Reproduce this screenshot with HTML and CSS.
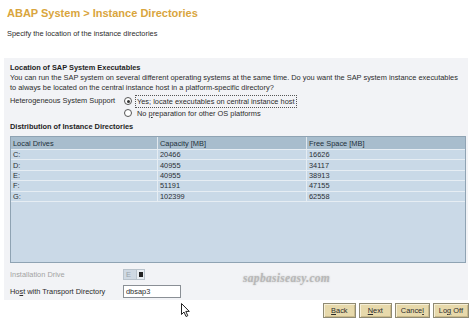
FILE: index.html
```html
<!DOCTYPE html>
<html>
<head>
  <title>ABAP System - Instance Directories</title>
  <link rel="stylesheet" href="styles.css">
</head>
<body>
  <div class="header">
    <h1>ABAP System &gt; Instance Directories</h1>
    <div class="intro">Specify the location of the instance directories</div>
  </div>

  <div class="panel">
    <div class="section-title">Location of SAP System Executables</div>
    <p class="para">You can run the SAP system on several different operating systems at the same time. Do you want the SAP system instance executables to always be located on the central instance host in a platform-specific directory?</p>

    <div class="form-row hetero">
      <div class="label">Heterogeneous System Support</div>
      <div class="options">
        <div class="option"><span class="radio checked"></span><span class="focus">Yes; locate executables on central instance host</span></div>
        <div class="option"><span class="radio"></span><span>No <u>p</u>reparation for other OS platforms</span></div>
      </div>
    </div>

    <div class="section-title dist">Distribution of Instance Directories</div>
    <div class="grid">
      <table>
        <tr>
          <th class="c1">Local Drives</th>
          <th class="c2">Capacity [MB]</th>
          <th class="c3">Free Space [MB]</th>
        </tr>
        <tr><td>C:</td><td>20466</td><td>16626</td></tr>
        <tr><td>D:</td><td>40955</td><td>34117</td></tr>
        <tr><td>E:</td><td>40955</td><td>38913</td></tr>
        <tr><td>F:</td><td>51191</td><td>47155</td></tr>
        <tr><td>G:</td><td>102399</td><td>62558</td></tr>
      </table>
    </div>

    <div class="form-row drive">
      <div class="label disabled">Installation Drive</div>
      <div class="select"><span>E</span><span class="drop"></span></div>
    </div>
    <div class="form-row host">
      <div class="label">Ho<u>s</u>t with Transport Directory</div>
      <div class="input">dbsap3</div>
    </div>

    <div class="watermark">sapbasiseasy.com</div>
  </div>

  <div class="buttons">
    <button><u>B</u>ack</button>
    <button><u>N</u>ext</button>
    <button>Cance<u>l</u></button>
    <button>Lo<u>g</u> Off</button>
  </div>

  <svg class="cursor" width="10" height="15" viewBox="0 0 10 15">
    <path d="M0.5 0.5 L0.5 11.5 L3 9 L5 13.5 L6.8 12.7 L4.8 8.4 L8.3 8.4 Z" fill="#fff" stroke="#222" stroke-width="1"/>
  </svg>
</body>
</html>
```

FILE: styles.css
```css
body {
  margin: 0;
  font-family: "Liberation Sans", Arial, sans-serif;
  font-size: 7.4px;
  color: #2b2b2b;
  background: #fff;
  position: relative;
  width: 474px;
  height: 322px;
  overflow: hidden;
}
.header {
  padding: 6px 7px 0;
  height: 52px;
}
h1 {
  margin: 0;
  font-size: 11px;
  line-height: 15px;
  color: #d9a53d;
}
.intro {
  margin-top: 7px;
  line-height: 12px;
}
.panel {
  position: relative;
  margin: 0 6px 0 4px;
  padding: 5px 2px 2px 6px;
  background: #f2f3f6;
  height: 235px;
}
.section-title {
  font-weight: bold;
  line-height: 10px;
  color: #1e1e1e;
}
.para {
  margin: 0;
  line-height: 10px;
  width: 456px;
}
.form-row {
  display: grid;
  grid-template-columns: 113px 1fr;
  align-items: center;
}
.hetero {
  margin-top: 2px;
  align-items: start;
}
.hetero .label {
  line-height: 12px;
}
.options .option {
  display: flex;
  align-items: center;
  height: 12px;
}
.radio {
  width: 6px;
  height: 6px;
  border: 1px solid #555;
  border-radius: 50%;
  background: #fff;
  margin: 0 5px 0 1px;
  position: relative;
}
.radio.checked::after {
  content: "";
  position: absolute;
  left: 1.5px;
  top: 1.5px;
  width: 3px;
  height: 3px;
  border-radius: 50%;
  background: #333;
}
.focus {
  border: 1px dotted #555;
  padding: 1px 1px;
  margin-left: -2px;
}
.dist {
  margin-top: 3px;
}
.grid {
  margin-top: 4px;
  width: 454px;
  height: 125px;
  border: 1px solid #8fa3b3;
  background: #cad9e7;
}
table {
  width: 100%;
  border-collapse: collapse;
}
th {
  background: #a8bdcd;
  font-weight: normal;
  text-align: left;
  height: 12px;
  padding: 0 2px;
  color: #22303a;
  border-left: 1px solid #e1e8ee;
  border-bottom: 1px solid #e6edf3;
}
th.c1 {
  width: 142px;
  border-left: none;
}
th.c2 {
  width: 144px;
}
td {
  height: 9.4px;
  line-height: 9px;
  padding: 0 2px;
  background: #c9d9e7;
  border-left: 1px solid #e6edf3;
  border-bottom: 1px solid #e6edf3;
  color: #2a2f35;
}
td:first-child {
  border-left: none;
}
.drive {
  margin-top: 5px;
  height: 12px;
}
.label.disabled {
  color: #a3a3a3;
}
.select {
  width: 22px;
  height: 11px;
  box-sizing: border-box;
  border: 1px solid #b9c3cc;
  background: #cfd9e3;
  display: flex;
  align-items: center;
  justify-content: space-between;
  padding-left: 2px;
  color: #9aa3ab;
}
.drop {
  width: 7px;
  height: 9px;
  background: #e8edf2;
  border-left: 1px solid #b9c3cc;
  position: relative;
}
.drop::after {
  content: "";
  position: absolute;
  left: 1.5px;
  top: 2px;
  width: 4px;
  height: 5px;
  background: #222;
}
.host {
  margin-top: 5px;
  height: 13px;
}
.input {
  width: 58px;
  height: 13px;
  box-sizing: border-box;
  border: 1px solid #8a8f95;
  background: #fff;
  line-height: 11px;
  padding-left: 2px;
}
.watermark {
  position: absolute;
  left: 239px;
  top: 214px;
  font-family: "Liberation Serif", serif;
  font-style: italic;
  font-weight: bold;
  font-size: 11.5px;
  color: #b8b8b8;
  text-shadow: 0 0 2px #c4c4c4;
  letter-spacing: 0.3px;
}
.buttons {
  display: flex;
  justify-content: flex-end;
  gap: 3px;
  padding: 3px 5px 0 0;
}
button {
  font-family: inherit;
  font-size: 7.4px;
  height: 15px;
  padding: 0 5px;
  min-width: 33px;
  border: 1px solid #8f8a73;
  background: #e7d9ab;
  color: #2b2b2b;
  border-radius: 0;
  box-shadow: inset 1px 1px 0 #f6efd6, inset -1px -1px 0 #c9b98a;
}
.cursor {
  position: absolute;
  left: 181px;
  top: 303px;
}
```
